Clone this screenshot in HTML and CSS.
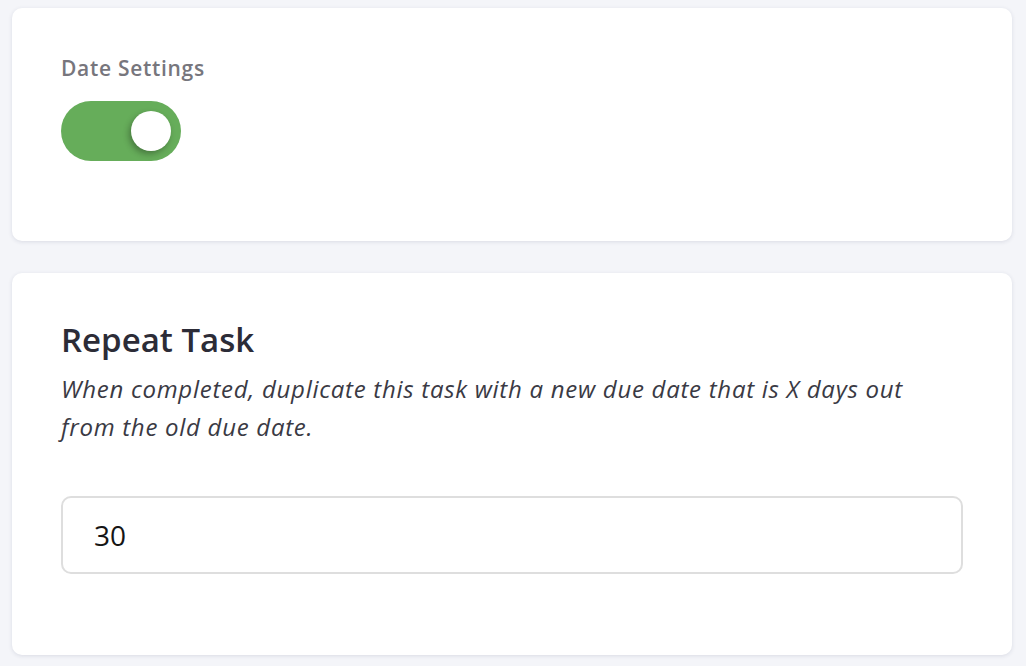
FILE: index.html
```html
<!DOCTYPE html>
<html>
<head>
<meta charset="utf-8">
<link rel="stylesheet" href="styles.css">
</head>
<body>
<div class="page">
  <section class="card card-date">
    <div class="label">Date Settings</div>
    <div class="toggle on"><span class="knob"></span></div>
  </section>
  <section class="card card-repeat">
    <h2 class="title">Repeat Task</h2>
    <p class="desc">When completed, duplicate this task with a new due date that is X days out from the old due date.</p>
    <div class="input">30</div>
  </section>
</div>
</body>
</html>
```
FILE: styles.css
```css
* { box-sizing: border-box; }
html, body { margin: 0; padding: 0; }
body {
  background: #f4f5f9;
  font-family: "Open Sans", Lato, sans-serif;
  width: 1026px;
  height: 666px;
  overflow: hidden;
}
.page {
  padding: 8px 14px 0 12px;
  display: flex;
  flex-direction: column;
  gap: 32px;
}
.card {
  background: #fff;
  border-radius: 10px;
  box-shadow: 0 1px 4px rgba(30, 40, 80, 0.12);
  padding: 47px 49px 0 49px;
}
.card-date { height: 233px; }
.card-repeat { height: 382px; }
.label {
  font-size: 21px;
  line-height: 26px;
  font-weight: 600;
  letter-spacing: 0.7px;
  color: #77767d;
}
.toggle {
  margin-top: 20px;
  width: 120px;
  height: 60px;
  border-radius: 30px;
  background: #66ad5a;
  display: flex;
  align-items: center;
  justify-content: flex-end;
  padding: 0 10px;
}
.knob {
  width: 40px;
  height: 40px;
  border-radius: 50%;
  background: #fff;
  box-shadow: -2px 3px 6px rgba(0, 0, 0, 0.3);
}
.title {
  margin: 0;
  font-size: 33px;
  line-height: 40px;
  font-weight: 600;
  color: #2c2c37;
}
.desc {
  margin: 10px 0 0 0;
  font-size: 24px;
  line-height: 38px;
  font-style: italic;
  letter-spacing: 0.72px;
  color: #3a3a44;
  max-width: 860px;
}
.input {
  margin-top: 50px;
  height: 78px;
  border: 2px solid #dedede;
  border-radius: 10px;
  padding: 0 31px;
  display: flex;
  align-items: center;
  font-size: 28px;
  color: #151515;
}
```
